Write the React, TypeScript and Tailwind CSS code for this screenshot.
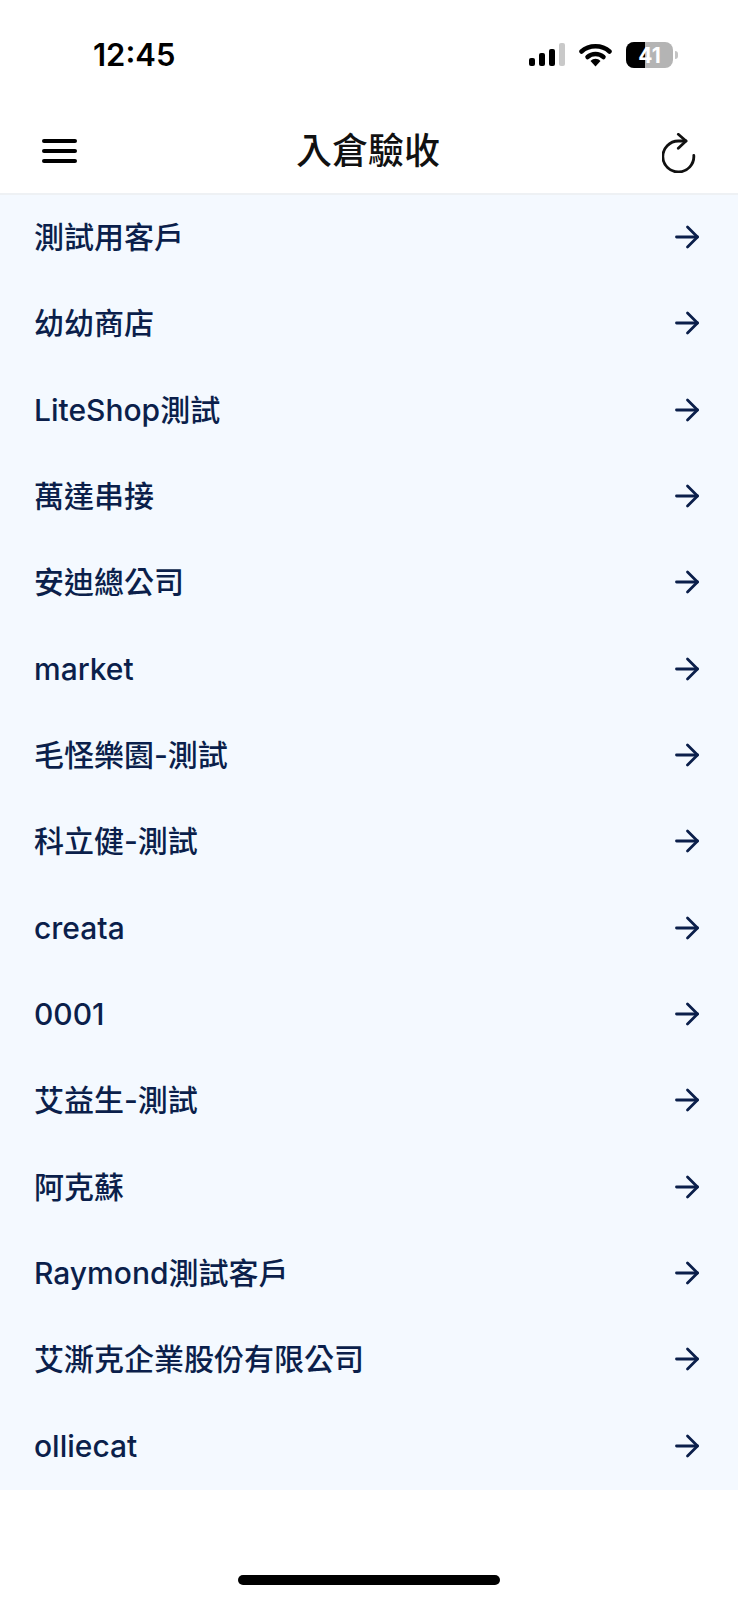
const customers = [
  '測試用客戶',
  '幼幼商店',
  'LiteShop測試',
  '萬達串接',
  '安迪總公司',
  'market',
  '毛怪樂園-測試',
  '科立健-測試',
  'creata',
  '0001',
  '艾益生-測試',
  '阿克蘇',
  'Raymond測試客戶',
  '艾澌克企業股份有限公司',
  'olliecat',
]

function StatusIcons() {
  return (
    <div className="flex items-center">
      <svg width="37" height="24" viewBox="0 0 37 24">
        <rect x="1" y="15" width="6" height="8" rx="2" fill="#000" />
        <rect x="11" y="10" width="6" height="13" rx="2" fill="#000" />
        <rect x="21" y="6" width="6" height="17" rx="2" fill="#000" />
        <rect x="31" y="0" width="6" height="23" rx="2" fill="#c9c9c9" />
      </svg>
      <svg className="ml-[14px]" width="33" height="24" viewBox="0 0 33 24">
        <path d="M2.5 8.5C10 1.5 23 1.5 30.5 8.5" fill="none" stroke="#000" strokeWidth="4.5" strokeLinecap="round" />
        <path d="M8.5 14C13 10 20 10 24.5 14" fill="none" stroke="#000" strokeWidth="4.5" strokeLinecap="round" />
        <path d="M11.5 18C14.5 15 18.5 15 21.5 18L16.5 23.5Z" fill="#000" />
      </svg>
      <div className="relative ml-[14px] flex h-[26px] w-[47px] overflow-hidden rounded-[8px] bg-[#b4b4b4]">
        <div className="h-full w-[19px] bg-black" />
        <span className="absolute inset-0 flex items-center justify-center font-['Inter',sans-serif] text-[21px] font-bold leading-none text-white">
          41
        </span>
      </div>
      <div className="ml-[2px] h-[8px] w-[3px] rounded-r-full bg-[#c4c4c4]" />
    </div>
  )
}

function ArrowIcon() {
  return (
    <svg width="26" height="24" viewBox="0 0 26 24" fill="none" stroke="#0b1f4b" strokeWidth="2.8" strokeLinecap="round" strokeLinejoin="round">
      <path d="M2.5 12H23.5" />
      <path d="M13.5 2L23.5 12L13.5 22" />
    </svg>
  )
}

export default function App() {
  return (
    <div className="flex h-[1600px] flex-col bg-white font-['Inter','Noto_Sans_CJK_TC',sans-serif]">
      <div className="flex h-[110px] items-start justify-between pl-[93px] pr-[60px] pt-[36px]">
        <span className="text-[31px] font-semibold leading-[38px] text-black">12:45</span>
        <div className="pt-[6px]">
          <StatusIcons />
        </div>
      </div>

      <header className="flex h-[85px] items-center justify-between border-b-2 border-[#eef1f4] pb-[2px] pl-[42px] pr-[40px]">
        <svg width="35" height="26" viewBox="0 0 35 26" stroke="#000" strokeWidth="4" strokeLinecap="round">
          <path d="M2 3H33" />
          <path d="M2 13H33" />
          <path d="M2 23H33" />
        </svg>
        <h1 className="mr-[3px] text-[36px] font-medium leading-none text-[#111]">入倉驗收</h1>
        <svg className="mt-[4px]" width="36" height="40" viewBox="0 0 36 40" fill="none" stroke="#111" strokeWidth="2.8" strokeLinecap="round" strokeLinejoin="round">
          <path d="M24 8H16.3A15.5 15.5 0 1 0 31.8 22.5" />
          <path d="M16.3 1.3L24 8L16.3 15.3" />
        </svg>
      </header>

      <ul className="bg-[#f4f9ff]">
        {customers.map((name) => (
          <li key={name} className="flex h-[86.33px] items-center justify-between pb-[2px] pl-[34px] pr-[38px]">
            <span className="text-[30px] font-medium leading-none text-[#0b1f4b]">{name}</span>
            <ArrowIcon />
          </li>
        ))}
      </ul>

      <div className="mt-auto flex justify-center pb-[15px]">
        <div className="h-[10px] w-[262px] rounded-full bg-black" />
      </div>
    </div>
  )
}
